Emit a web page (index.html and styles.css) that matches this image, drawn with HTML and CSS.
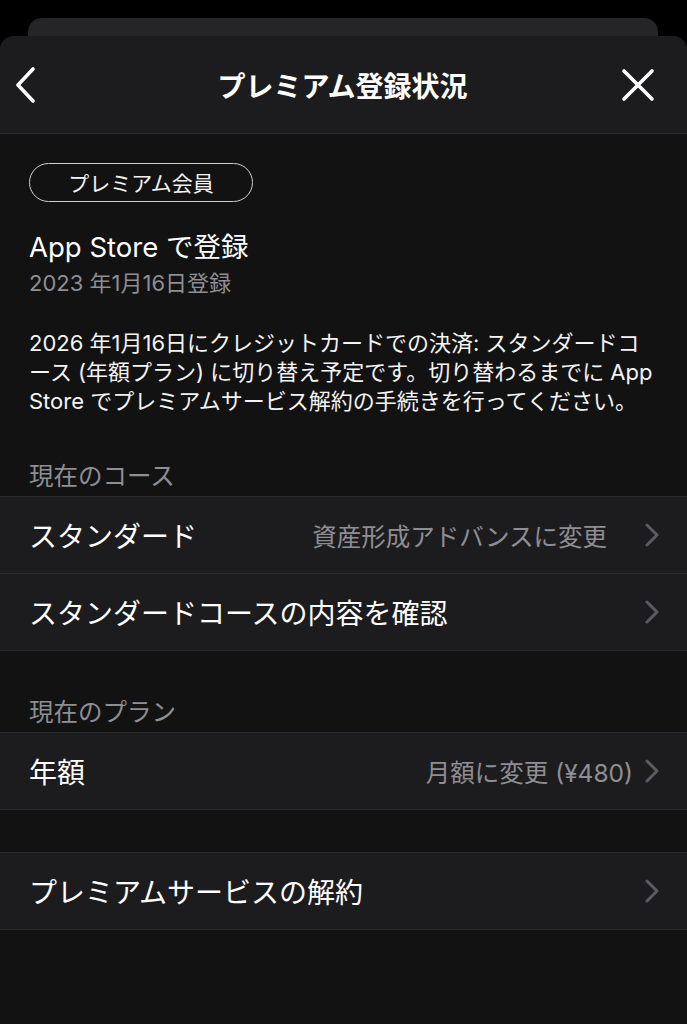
FILE: index.html
```html
<!DOCTYPE html>
<html lang="ja">
<head>
    <meta charset="UTF-8">
    <title>プレミアム登録状況</title>
    <link rel="stylesheet" href="styles.css">
</head>
<body>
    <div class="back-card"></div>
    <div class="sheet">
        <header class="nav">
            <button class="nav-btn" aria-label="戻る">
                <svg width="22" height="36" viewBox="0 0 22 36"><path d="M19 2 L4 18 L19 34" fill="none" stroke="#fff" stroke-width="3.6" stroke-linecap="round" stroke-linejoin="round"/></svg>
            </button>
            <h1 class="nav-title">プレミアム登録状況</h1>
            <button class="nav-btn" aria-label="閉じる">
                <svg width="34" height="34" viewBox="0 0 34 34"><path d="M3 3 L31 31 M31 3 L3 31" fill="none" stroke="#fff" stroke-width="3.6" stroke-linecap="round"/></svg>
            </button>
        </header>

        <main class="content">
            <div class="intro">
                <span class="badge">プレミアム会員</span>
                <div class="store">App Store で登録</div>
                <div class="since">2023 年1月16日登録</div>
                <p class="notice">2026 年1月16日にクレジットカードでの決済: スタンダードコ<br>ース (年額プラン) に切り替え予定です。切り替わるまでに App<br>Store でプレミアムサービス解約の手続きを行ってください。</p>
            </div>

            <h2 class="section-title">現在のコース</h2>
            <div class="group">
                <a class="row">
                    <span class="row-label">スタンダード</span>
                    <span class="row-value row-value-wide">資産形成アドバンスに変更</span>
                    <svg class="chev" width="14" height="24" viewBox="0 0 14 24"><path d="M2 2 L12 12 L2 22" fill="none" stroke="#5c5c60" stroke-width="3" stroke-linecap="round" stroke-linejoin="round"/></svg>
                </a>
                <a class="row">
                    <span class="row-label">スタンダードコースの内容を確認</span>
                    <svg class="chev" width="14" height="24" viewBox="0 0 14 24"><path d="M2 2 L12 12 L2 22" fill="none" stroke="#5c5c60" stroke-width="3" stroke-linecap="round" stroke-linejoin="round"/></svg>
                </a>
            </div>

            <h2 class="section-title">現在のプラン</h2>
            <div class="group">
                <a class="row">
                    <span class="row-label">年額</span>
                    <span class="row-value">月額に変更 (¥480)</span>
                    <svg class="chev" width="14" height="24" viewBox="0 0 14 24"><path d="M2 2 L12 12 L2 22" fill="none" stroke="#5c5c60" stroke-width="3" stroke-linecap="round" stroke-linejoin="round"/></svg>
                </a>
            </div>

            <div class="group group-gap">
                <a class="row">
                    <span class="row-label">プレミアムサービスの解約</span>
                    <svg class="chev" width="14" height="24" viewBox="0 0 14 24"><path d="M2 2 L12 12 L2 22" fill="none" stroke="#5c5c60" stroke-width="3" stroke-linecap="round" stroke-linejoin="round"/></svg>
                </a>
            </div>
        </main>
    </div>
</body>
</html>
```

FILE: styles.css
```css
html, body { height: 100%; }
body {
    margin: 0;
    background: #000;
    font-family: Inter, "Noto Sans CJK JP", sans-serif;
    color: #fff;
    overflow: hidden;
}
.back-card {
    margin: 18px 29px 0 28px;
    height: 18px;
    background: #252527;
    border-radius: 14px 14px 0 0;
}
.sheet {
    background: #121212;
    border-radius: 14px 14px 0 0;
    overflow: hidden;
    height: calc(100% - 36px);
}
.nav {
    height: 97px;
    background: #1c1c1e;
    border-bottom: 1px solid #2a2a2c;
    display: flex;
    align-items: center;
    justify-content: space-between;
    padding: 0 32px 0 14px;
}
.nav-btn {
    background: none;
    border: none;
    padding: 0;
    display: flex;
    align-items: center;
    cursor: pointer;
}
.nav-title {
    margin: 0;
    font-size: 28px;
    font-weight: 700;
    position: relative;
    left: 14px;
}
.content { padding-top: 29px; }
.intro { padding: 0 29px; }
.badge {
    display: inline-block;
    width: 222px;
    height: 37px;
    line-height: 37px;
    text-align: center;
    border: 1.5px solid #cfcfd2;
    border-radius: 20px;
    font-size: 21px;
    font-family: "Noto Sans CJK JP", sans-serif;
    color: #f2f2f2;
}
.store {
    margin-top: 26px;
    font-size: 27.5px;
    line-height: 38px;
}
.since {
    margin-top: 2px;
    font-size: 22px;
    line-height: 30px;
    color: #8e8e93;
}
.notice {
    margin: 31px 0 0;
    font-size: 22px;
    line-height: 29px;
    white-space: nowrap;
    color: #f4f4f4;
}
.section-title {
    margin: 45px 0 5px;
    padding: 0 29px;
    font-size: 24.5px;
    line-height: 30px;
    font-weight: 400;
    color: #8e8e93;
}
.group {
    background: #1c1c1e;
    border-top: 1px solid #2a2a2c;
    border-bottom: 1px solid #2a2a2c;
}
.group-gap { margin-top: 42px; }
.group + .section-title { margin-top: 46px; }
.row {
    height: 76px;
    display: flex;
    align-items: center;
    padding: 0 30px 0 29px;
    color: #fff;
    text-decoration: none;
}
.row + .row { border-top: 1px solid #2a2a2c; }
.row-label {
    font-size: 28px;
    flex: 1;
    white-space: nowrap;
}
.row-value {
    font-size: 24.5px;
    color: #8e8e93;
    margin-right: 12px;
    white-space: nowrap;
}
.row-value-wide { margin-right: 38px; }
.chev { flex: none; margin-right: -2px; }
```
